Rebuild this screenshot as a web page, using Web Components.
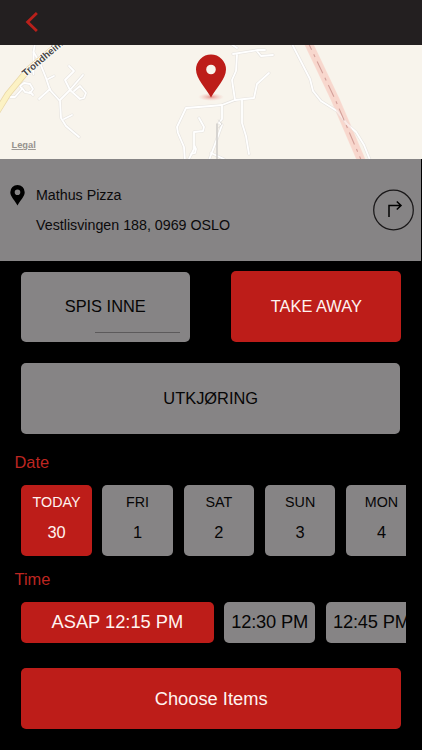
<!DOCTYPE html>
<html lang="no">
<head>
<meta charset="utf-8">
<title>Mathus Pizza</title>
<style>
html,body{margin:0;height:100%;background:#000;overflow:hidden}
body{font-family:"Liberation Sans",Arial,sans-serif}
</style>
</head>
<body>
<order-screen></order-screen>
<script>
const define = (name, html) => customElements.define(name, class extends HTMLElement {
  constructor() {
    super();
    const t = document.createElement('template');
    t.innerHTML = html;
    this.attachShadow({mode: 'open'}).append(t.content.cloneNode(true));
  }
});

define('nav-header', `<style>
:host{display:flex;height:45px;background:#231f20;padding-left:25px;align-items:center;box-sizing:border-box}
svg{display:block;margin-top:-1px}</style>
<svg width="15" height="22" viewBox="0 0 15 22"><path d="M11.900 2 2.600 11l9.300 9" fill="none" stroke="#b9201b" stroke-width="2.800"/></svg>`);

define('area-map', `<style>
:host{display:block;height:114px;overflow:hidden;background:#f8f4ec}
svg{display:block}</style>
<svg width="422" height="114" viewBox="0 45 422 114" fill="none" stroke-linejoin="round" stroke-linecap="round">
<defs>
<radialGradient id="sh"><stop offset="0" stop-color="#d9534c" stop-opacity=".6"/><stop offset="1" stop-color="#f0a8a0" stop-opacity="0"/></radialGradient>
<g id="roads">
<path d="M36 38 33.500 52 40 63 46 78 50 90 60 101 61 118 66 126 79 137"/>
<path d="M33.500 52V74M40 63l-10 10M48 79l6-3M50 89 39 99M64 119l8-4M60 100 70 90 65 80 74 71 69 66M70 90 83 75M70 90 80 99 84 98 86 93 80 86 74 91"/>
<path d="M10 97h5l7-8-2-3 4-3 6 1 3 5-3 4-5-1-3-4M30 92l3 3"/>
<path d="M185 161 184 147 178 133 177 127 186 108 211 106 222 105 235 100 254 98 257 84 269 73"/>
<path d="M235 100 232 80 236 71 237 55M233 54l25-4 7 0M257 51l4 5 12-1M231 44l6 4"/>
<path d="M199 118l5 9-1 4-9 1 0 17-6 12M194 145l2 4-1 4-4 1"/>
<path d="M222 106v13l-3 4 3 2-8 22-5 13M211 153l13 6M242 100v23l4 13 3 18"/>
<path d="M292 44 310 79 313 91 321 101 337 111 347 124 356 132 364 145 370 160"/>
</g></defs>
<path d="m306 38 29 61 12 28 15 35" stroke="#f8dcd2" stroke-width="8.500"/>
<use href="#roads" stroke="#e6e3df" stroke-width="3"/>
<use href="#roads" stroke="#fff" stroke-width="1.800"/>
<path d="m306 38 29 61 12 28 15 35" stroke="#f8d1c8" stroke-opacity=".45" stroke-width="7"/>
<path d="m306 38 29 61 12 28 15 35" stroke="#d3a09a" stroke-width="1.100" stroke-linecap="butt" stroke-dasharray="13 5 3 5"/>
<path d="M-3 112 8 94 28 70 60 43" stroke="#e9d7a8" stroke-width="6.500"/>
<path d="M-3 112 8 94 28 70 60 43" stroke="#fcf2c4" stroke-width="5"/>
<path d="M217 124v36" stroke="#cecbc9" stroke-width="1.500"/>
<path d="M218.500 120l3.500 4-3.500 4" stroke="#d4d1ce" stroke-width=".7"/>
<text transform="translate(25.500 77) rotate(-40.500)" font-size="9.800" font-weight="bold" fill="#4c4844" stroke="#fff" stroke-width="1.500" paint-order="stroke">Trondheim</text>
<text x="11.500" y="148" font-size="9.300" font-weight="bold" fill="#96928e" text-decoration="underline">Legal</text>
<ellipse cx="211" cy="97" rx="13" ry="4" fill="url(#sh)"/>
<path d="M211 97.500C206 88 196 79 196 69.500a15 15 0 0 1 30 0c0 9.500-10 18.500-15 28ZM211 64.700a4.800 4.800 0 1 0 0 9.600a4.800 4.800 0 1 0 0-9.600Z" fill="#bd1d19" fill-rule="evenodd"/>
</svg>`);

define('venue-info', `<style>
:host{display:flex;height:102px;width:421px;background:#868485;box-sizing:border-box;padding:26px 7.500px 0 10px;font-size:14.250px;color:#0b0a0b}
.pin{display:block;flex:none;margin-top:0}
.text{flex:1;padding-left:11px;line-height:29.500px;margin-top:-4px}
.go{flex:none;display:block;margin-top:4px}
::slotted(*){display:block}</style>
<svg class="pin" width="15" height="21" viewBox="0 0 15 21"><path d="M7.500 20.500C5 15.500.3 11.700.3 7.200a7.200 7.200 0 0 1 14.400 0c0 4.500-4.700 8.300-7.200 13.300ZM7.500 4.400a2.800 2.800 0 1 0 0 5.600a2.800 2.800 0 1 0 0-5.600Z" fill="#000" fill-rule="evenodd"/></svg>
<div class="text"><slot></slot></div>
<svg class="go" width="41" height="42" viewBox="0 0 41 42" fill="none" stroke="#1a1819"><circle cx="20.500" cy="21" r="19.800" stroke-width="1.250"/><path d="M16 28V16.500H28M23.800 12.500l4.200 4-4.200 4" stroke-width="1.500" stroke="#000"/></svg>`);

define('choice-tile', `<style>
:host{display:flex;flex-direction:column;align-items:center;justify-content:center;flex:none;box-sizing:border-box;border-radius:5px;background:#868485;color:#060606;font-size:16.400px;white-space:nowrap}
:host([active]){background:#bd1d19;color:#fff3f0}</style><slot></slot>`);

define('day-tile', `<style>
:host{display:flex;flex-direction:column;align-items:center;flex:none;width:70.300px;height:70.500px;box-sizing:border-box;border-radius:5px;background:#868485;color:#060606;font-size:16.400px;line-height:20px;padding-top:7px}
:host([active]){background:#bd1d19;color:#fff3f0;width:71px;height:71px;margin-right:-.6px}
.d{font-size:14.300px;margin-bottom:10px}</style>
<span class="d"><slot name="day"></slot></span><slot></slot>`);

define('section-title', `<style>:host{display:block;padding-left:14.500px;font-size:16.400px;line-height:20px;height:20px;color:#bd2621}</style><slot></slot>`);

define('scroll-row', `<style>:host{display:flex;width:385.400px;margin-left:21px;overflow:hidden;align-items:flex-start;gap:11px}</style><slot></slot>`);

define('order-screen', `<style>
:host{display:flex;flex-direction:column;width:422px;height:750px;background:#000;overflow:hidden}
.modes{display:flex;justify-content:space-between;align-items:center;margin:10px 20.700px 0 21px;height:71px}
.eat{width:168.500px;height:70px;position:relative}
.eat i{position:absolute;right:9.500px;bottom:9px;width:85px;height:1px;background:#5c5a5b}
.take{width:170px;height:71px}
.drive{width:379.400px;height:70.500px;margin:21px 0 0 21px}
.date{margin-top:18.500px}
.days{margin-top:13px;height:71px}
.time{margin-top:13px}
.times{margin-top:13px;height:40.500px;gap:10.500px}
.times choice-tile{height:40.500px;font-size:18.300px}
.main{margin:25.500px 0 0 21px;width:380.300px;height:61px;font-size:18.300px}
.narrow{width:90.700px;letter-spacing:-.18px}
</style>
<nav-header></nav-header>
<area-map></area-map>
<venue-info><span>Mathus Pizza</span><span>Vestlisvingen 188, 0969 OSLO</span></venue-info>
<div class="modes"><choice-tile class="eat">SPIS INNE<i></i></choice-tile><choice-tile class="take" active>TAKE AWAY</choice-tile></div>
<choice-tile class="drive">UTKJØRING</choice-tile>
<section-title class="date">Date</section-title>
<scroll-row class="days">
<day-tile active><span slot="day">TODAY</span>30</day-tile><day-tile><span slot="day">FRI</span>1</day-tile><day-tile><span slot="day">SAT</span>2</day-tile><day-tile><span slot="day">SUN</span>3</day-tile><day-tile><span slot="day">MON</span>4</day-tile>
</scroll-row>
<section-title class="time">Time</section-title>
<scroll-row class="times">
<choice-tile active style="width:192.800px">ASAP 12:15 PM</choice-tile><choice-tile class="narrow">12:30 PM</choice-tile><choice-tile class="narrow" style="margin-left:.5px">12:45 PM</choice-tile>
</scroll-row>
<choice-tile class="main" active>Choose Items</choice-tile>`);
</script>
</body>
</html>
